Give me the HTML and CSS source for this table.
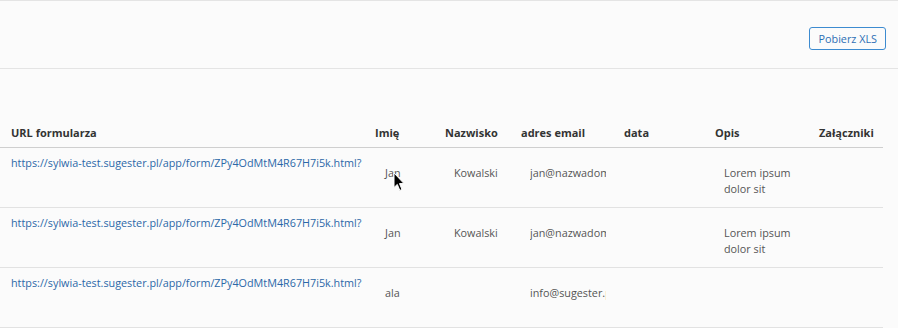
FILE: index.html
```html
<!DOCTYPE html>
<html lang="pl">
<head>
<meta charset="utf-8">
<title>Zgłoszenia</title>
<link rel="stylesheet" href="styles.css">
</head>
<body>
<div class="topbar">
  <button class="btn-xls" type="button">Pobierz XLS</button>
</div>
<div class="table">
  <div class="row head">
    <div class="th th-first">URL formularza</div>
    <div class="th">Imię</div>
    <div class="th">Nazwisko</div>
    <div class="th">adres email</div>
    <div class="th">data</div>
    <div class="th">Opis</div>
    <div class="th">Załączniki</div>
  </div>
  <div class="row body-row">
    <div class="td td-url"><a href="#">https://sylwia-test.sugester.pl/app/form/ZPy4OdMtM4R67H7i5k.html?</a></div>
    <div class="td td-name cursor-host">Jan
      <svg class="cursor" width="13" height="20" viewBox="0 0 13 20"><path d="M1 1 L1 15.5 L4.3 12.4 L6.8 18.4 L9 17.5 L6.5 11.6 L11 11.6 Z" fill="#000" stroke="#fff" stroke-width="1"/></svg>
    </div>
    <div class="td">Kowalski</div>
    <div class="td"><div class="clip">jan@nazwadomeny.pl</div></div>
    <div class="td"></div>
    <div class="td">Lorem ipsum dolor sit</div>
    <div class="td"></div>
  </div>
  <div class="row body-row">
    <div class="td td-url"><a href="#">https://sylwia-test.sugester.pl/app/form/ZPy4OdMtM4R67H7i5k.html?</a></div>
    <div class="td td-name">Jan</div>
    <div class="td">Kowalski</div>
    <div class="td"><div class="clip">jan@nazwadomeny.pl</div></div>
    <div class="td"></div>
    <div class="td">Lorem ipsum dolor sit</div>
    <div class="td"></div>
  </div>
  <div class="row body-row">
    <div class="td td-url"><a href="#">https://sylwia-test.sugester.pl/app/form/ZPy4OdMtM4R67H7i5k.html?</a></div>
    <div class="td td-name">ala</div>
    <div class="td"></div>
    <div class="td"><div class="clip">info@sugester.pl</div></div>
    <div class="td"></div>
    <div class="td"></div>
    <div class="td"></div>
  </div>
</div>
</body>
</html>
```
FILE: styles.css
```css
* { box-sizing: border-box; }
html, body {
  margin: 0;
  padding: 0;
  background: #fbfbfb;
  font-family: "Open Sans", "DejaVu Sans", sans-serif;
  color: #555;
}
.topbar {
  height: 69px;
  border-top: 1px solid #e4e4e4;
  border-bottom: 1px solid #e4e4e4;
  padding: 26px 12px 0 0;
  display: flex;
  justify-content: flex-end;
  align-items: flex-start;
}
.btn-xls {
  height: 23px;
  padding: 0 8px 0 9px;
  border: 1px solid #3d8bd0;
  border-radius: 3px;
  background: transparent;
  color: #2d6fb5;
  font-family: "Open Sans", sans-serif;
  font-size: 10.8px;
  line-height: 21px;
}
.table {
  width: 883px;
  margin-top: 48px;
}
.row {
  display: grid;
  grid-template-columns: 367px 70px 76px 103px 91px 104px 72px;
}
.head {
  border-bottom: 1px solid #cfcfcf;
  padding: 7px 0 6px;
}
.th {
  font-size: 11px;
  line-height: 17px;
  font-weight: 700;
  color: #333;
  padding-left: 8px;
  white-space: nowrap;
}
.th-first { padding-left: 11px; }
.body-row {
  height: 60px;
  border-bottom: 1px solid #e2e2e2;
}
.td {
  font-size: 10.8px;
  line-height: 16px;
  padding: 17px 8px 0 17px;
  color: #555;
}
.td-name { padding-left: 18px; }
.td-url { padding: 7px 0 0 11px; white-space: nowrap; }
.td-url a { color: #2b68a8; text-decoration: none; }
.clip {
  width: 76px;
  overflow: hidden;
  white-space: nowrap;
}
.cursor-host { position: relative; }
.cursor {
  position: absolute;
  left: 26px;
  top: 24px;
}
```
